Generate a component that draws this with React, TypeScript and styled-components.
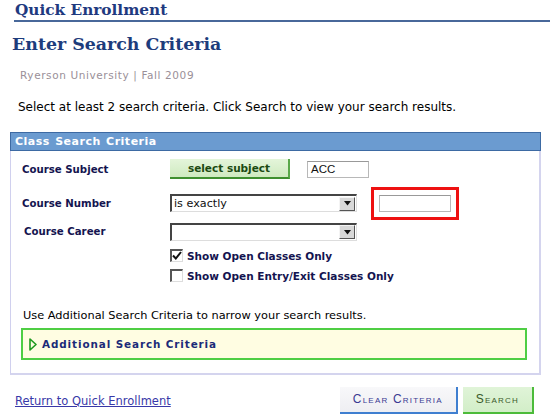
import React from "react";
import styled, { createGlobalStyle } from "styled-components";

const Global = createGlobalStyle`
  html, body { margin: 0; padding: 0; background: #fff; }
  body { font-family: "DejaVu Sans", Verdana, sans-serif; width: 550px; height: 417px; overflow: hidden; }
`;

const Page = styled.div`
  width: 550px;
  height: 417px;
  position: relative;
`;

const TitleBar = styled.div`
  margin-left: 14px;
  height: 20px;
  border-bottom: 2px solid #48689a;
  padding-left: 1px;
`;

const Title = styled.h1`
  margin: 0;
  font-family: "DejaVu Serif", Georgia, serif;
  font-weight: bold;
  font-size: 15.3px;
  line-height: 20px;
  color: #1f3a80;
`;

const Heading = styled.h2`
  margin: 11px 0 0 12px;
  font-family: "DejaVu Serif", Georgia, serif;
  font-weight: bold;
  font-size: 17.4px;
  line-height: 22px;
  color: #1d3c7c;
`;

const Context = styled.div`
  margin: 13px 0 0 20px;
  font-size: 10.5px;
  letter-spacing: 0.6px;
  line-height: 14px;
  color: #9a8f98;
`;

const Instructions = styled.div`
  margin: 18px 0 0 18px;
  font-size: 12px;
  line-height: 14px;
  color: #000;
`;

const Panel = styled.div`
  margin: 18px 0 0 10px;
  width: 531px;
  box-sizing: border-box;
  border: 1px solid #d0d0ee;
  border-top: none;
  border-right: 2px solid #d4d4ee;
  border-bottom: 2px solid #d4d4ee;
`;

const PanelHeader = styled.div`
  height: 19px;
  margin: 0 -2px 0 -1px;
  box-sizing: border-box;
  background: #6b9bd0;
  border: 1px solid #3d6aa3;
  color: #fff;
  font-weight: bold;
  font-size: 11px;
  letter-spacing: 0.5px;
  word-spacing: 1px;
  line-height: 17px;
  padding-left: 4px;
`;

const PanelBody = styled.div`
  padding: 8px 11px 13px 9px;
`;

const Row = styled.div<{ h: number; mt: number }>`
  display: flex;
  align-items: center;
  height: ${(p) => p.h}px;
  margin-top: ${(p) => p.mt}px;
`;

const Label = styled.div<{ indent?: number }>`
  width: 150px;
  padding-left: ${(p) => p.indent ?? 2}px;
  box-sizing: border-box;
  font-weight: bold;
  font-size: 10.2px;
  color: #141450;
  flex-shrink: 0;
`;

const GreenButton = styled.div`
  width: 120px;
  height: 20px;
  box-sizing: border-box;
  background: linear-gradient(#e4f5da, #cfeac0);
  border-right: 2px solid #5aa84a;
  border-bottom: 2px solid #3f8f2f;
  color: #1c4a12;
  font-weight: bold;
  font-size: 10.5px;
  line-height: 18px;
  text-align: center;
`;

const TextInput = styled.div<{ w: number; ml?: number }>`
  width: ${(p) => p.w}px;
  margin-left: ${(p) => p.ml ?? 0}px;
  height: 17px;
  box-sizing: border-box;
  border: 1px solid #b8b8b8;
  border-top-color: #999;
  background: #fff;
  font-family: "Liberation Sans", Arial, sans-serif;
  font-size: 11.5px;
  line-height: 15px;
  padding-left: 3px;
  color: #111;
`;

const Select = styled.div`
  width: 187px;
  height: 18px;
  box-sizing: border-box;
  border-top: 2px solid #444;
  border-left: 2px solid #444;
  border-right: 1px solid #ddd;
  border-bottom: 1px solid #ddd;
  background: #fff;
  display: flex;
  align-items: center;
  font-size: 11.2px;
  color: #111;
  padding-left: 2px;
`;

const SelectText = styled.span`
  flex: 1;
`;

const Arrow = styled.span`
  width: 16px;
  height: 14px;
  box-sizing: border-box;
  margin-right: 1px;
  background: #d8d8d8;
  border-top: 1px solid #f4f4f4;
  border-left: 1px solid #f4f4f4;
  border-right: 1px solid #555;
  border-bottom: 1px solid #555;
  display: flex;
  align-items: center;
  justify-content: center;
`;

const Highlight = styled.div`
  margin-left: 14px;
  border: 3px solid #ee1111;
  padding: 5px;
`;

const CheckRow = styled.div`
  display: flex;
  align-items: center;
  gap: 4px;
  font-weight: bold;
  font-size: 10.5px;
  color: #141450;
`;

const Box = styled.span`
  width: 13px;
  height: 13px;
  box-sizing: border-box;
  border-top: 2px solid #555;
  border-left: 2px solid #555;
  border-right: 1px solid #ddd;
  border-bottom: 1px solid #ddd;
  background: #fff;
  display: flex;
  align-items: center;
  justify-content: center;
`;

const Note = styled.div`
  margin: 24px 0 0 3px;
  font-size: 11.35px;
  line-height: 14px;
  color: #000;
`;

const Additional = styled.div`
  margin: 6px 1px 0 1px;
  height: 32px;
  box-sizing: border-box;
  border: 2px solid #4fce44;
  background: #fffde2;
  display: flex;
  align-items: center;
  gap: 5px;
  padding-left: 6px;
  font-weight: bold;
  font-size: 10.4px;
  letter-spacing: 0.9px;
  color: #1b2a78;
`;

const Footer = styled.div`
  display: flex;
  align-items: center;
  margin-top: 12px;
  padding-left: 15px;
  height: 27px;
`;

const Link = styled.a`
  flex: 1;
  font-size: 11.5px;
  color: #3838a8;
  text-decoration: underline;
`;

const ActionButton = styled.div<{ variant: "clear" | "search" }>`
  height: 27px;
  box-sizing: border-box;
  padding: 0 ${(p) => (p.variant === "clear" ? 13 : 13)}px;
  margin-right: ${(p) => (p.variant === "clear" ? 5 : 16)}px;
  background: ${(p) => (p.variant === "clear" ? "linear-gradient(#f8f8fa,#eeeef2)" : "linear-gradient(#e0f4d8,#d2eec8)")};
  border-right: 2px solid ${(p) => (p.variant === "clear" ? "#3f7fd0" : "#4cbb3a")};
  border-bottom: 2px solid ${(p) => (p.variant === "clear" ? "#3f7fd0" : "#4cbb3a")};
  font-family: "Liberation Sans", Arial, sans-serif;
  font-variant: small-caps;
  font-size: 12px;
  letter-spacing: 1.2px;
  line-height: 25px;
  color: ${(p) => (p.variant === "clear" ? "#3a3a92" : "#3a5a2a")};
`;

const ArrowIcon = () => (
  <svg width="7" height="5" viewBox="0 0 7 5">
    <path d="M0 0 H7 L3.5 4.5 Z" fill="#111" />
  </svg>
);

const Check = () => (
  <svg width="10" height="10" viewBox="0 0 10 10">
    <path d="M1 4.5 L3.8 7.5 L9 1" stroke="#111" strokeWidth="2" fill="none" />
  </svg>
);

const Triangle = () => (
  <svg width="8" height="13" viewBox="0 0 8 13">
    <path d="M1 1 L7 6.5 L1 12 Z" fill="#fffde2" stroke="#1f9a1f" strokeWidth="1.6" strokeLinejoin="round" />
  </svg>
);

export default function App() {
  return (
    <Page>
      <Global />
      <TitleBar>
        <Title>Quick Enrollment</Title>
      </TitleBar>
      <Heading>Enter Search Criteria</Heading>
      <Context>Ryerson University | Fall 2009</Context>
      <Instructions>
        Select at least 2 search criteria. Click Search to view your search results.
      </Instructions>
      <Panel>
        <PanelHeader>Class Search Criteria</PanelHeader>
        <PanelBody>
          <Row h={20} mt={0}>
            <Label>Course Subject</Label>
            <GreenButton>select subject</GreenButton>
            <TextInput w={62} ml={17}>ACC</TextInput>
          </Row>
          <Row h={32} mt={8}>
            <Label>Course Number</Label>
            <Select>
              <SelectText>is exactly</SelectText>
              <Arrow>
                <ArrowIcon />
              </Arrow>
            </Select>
            <Highlight>
              <TextInput w={72} />
            </Highlight>
          </Row>
          <Row h={17} mt={4}>
            <Label indent={4}>Course Career</Label>
            <Select>
              <SelectText />
              <Arrow>
                <ArrowIcon />
              </Arrow>
            </Select>
          </Row>
          <Row h={17} mt={7}>
            <Label />
            <CheckRow>
              <Box>
                <Check />
              </Box>
              Show Open Classes Only
            </CheckRow>
          </Row>
          <Row h={17} mt={3}>
            <Label />
            <CheckRow>
              <Box />
              Show Open Entry/Exit Classes Only
            </CheckRow>
          </Row>
          <Note>Use Additional Search Criteria to narrow your search results.</Note>
          <Additional>
            <Triangle />
            Additional Search Criteria
          </Additional>
        </PanelBody>
      </Panel>
      <Footer>
        <Link href="#">Return to Quick Enrollment</Link>
        <ActionButton variant="clear">Clear Criteria</ActionButton>
        <ActionButton variant="search">Search</ActionButton>
      </Footer>
    </Page>
  );
}
